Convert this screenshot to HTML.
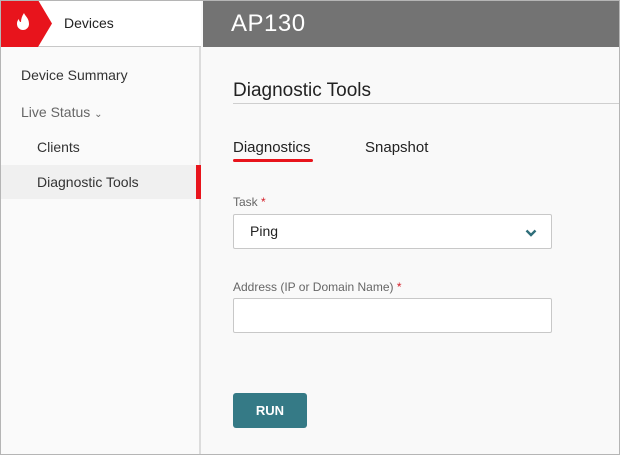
<!DOCTYPE html>
<html><head><style>
*{box-sizing:border-box;margin:0;padding:0}
body{width:620px;height:455px;overflow:hidden;font-family:"Liberation Sans",sans-serif;background:#f9f9f9;position:relative}
.frame{position:absolute;inset:0;border:1px solid #b5b5b5;z-index:10;pointer-events:none}
.side{position:absolute;left:0;top:0;width:201px;height:455px;background:#fafafa;border-right:2px solid #dcdcdc}
.top{position:absolute;left:0;top:0;width:201px;height:47px;background:#fff;border-bottom:1px solid #c8c8c8}
.logo{position:absolute;left:0;top:0;width:52px;height:47px;background:#e8141c;clip-path:polygon(0 0,38px 0,52px 23.5px,38px 47px,0 47px)}
.devices{position:absolute;left:64px;top:15px;font-size:14px;color:#222}
.nav{position:absolute;font-size:14px;color:#333}
.active{position:absolute;left:0;top:165px;width:201px;height:34px;background:#f0f0f0}
.redbar{position:absolute;left:196px;top:165px;width:5px;height:34px;background:#e8141c}
.hdr{position:absolute;left:203px;top:0;right:0;height:47px;background:#737373;color:#fff;font-size:24px;padding:10px 0 0 28px;letter-spacing:.5px}
.main{position:absolute;left:203px;top:47px;right:0;bottom:0;background:#f9f9f9}
.h1{position:absolute;left:233px;top:80px;font-size:19px;color:#222}
.hline{position:absolute;left:233px;top:103px;right:0;height:1px;background:#cfcfcf}
.tab{position:absolute;top:139px;font-size:15px;color:#222}
.tabu{position:absolute;left:233px;top:159px;width:80px;height:3px;background:#e8141c;border-radius:2px}
.lbl{position:absolute;left:233px;font-size:12px;color:#666}
.lbl b{color:#d4202a;font-weight:normal}
.box{position:absolute;left:233px;width:319px;height:35px;background:#fff;border:1px solid #c8c8c8;border-radius:2px}
.btn{position:absolute;left:233px;top:393px;width:74px;height:35px;background:#357a86;border-radius:3px;color:#fff;font-weight:bold;font-size:13px;text-align:center;line-height:35px}
</style></head><body>
<div class="side"></div>
<div class="active"></div><div class="redbar"></div>
<div class="top"><div class="logo">
<svg width="46" height="47" viewBox="0 0 46 47"><path d="M24 13c1 3 5 5 5 11a6 6 0 0 1-12 0c0-3 1-4 2-5 0 2 1 3 2 3 0-3 1-6 3-9z" fill="#fff"/></svg>
</div><div class="devices">Devices</div></div>
<div class="nav" style="left:21px;top:67px">Device Summary</div>
<div class="nav" style="left:21px;top:104px;color:#666">Live Status <span style="font-size:10px">&#8964;</span></div>
<div class="nav" style="left:37px;top:139px">Clients</div>
<div class="nav" style="left:37px;top:174px">Diagnostic Tools</div>
<div class="hdr">AP130</div>
<div class="main"></div>
<div class="h1">Diagnostic Tools</div>
<div class="hline"></div>
<div class="tab" style="left:233px">Diagnostics</div>
<div class="tab" style="left:365px">Snapshot</div>
<div class="tabu"></div>
<div class="lbl" style="top:195px">Task <b>*</b></div>
<div class="box" style="top:214px"><span style="position:absolute;left:16px;top:8px;font-size:14px;color:#222">Ping</span>
<svg style="position:absolute;right:14px;top:14px" width="12" height="8" viewBox="0 0 12 8"><path d="M1.5 1.5l4.5 4.5 4.5-4.5" stroke="#2f6e7a" stroke-width="2.4" fill="none"/></svg></div>
<div class="lbl" style="top:280px">Address (IP or Domain Name) <b>*</b></div>
<div class="box" style="top:298px"></div>
<div class="btn">RUN</div>
<div class="frame"></div>
</body></html>
